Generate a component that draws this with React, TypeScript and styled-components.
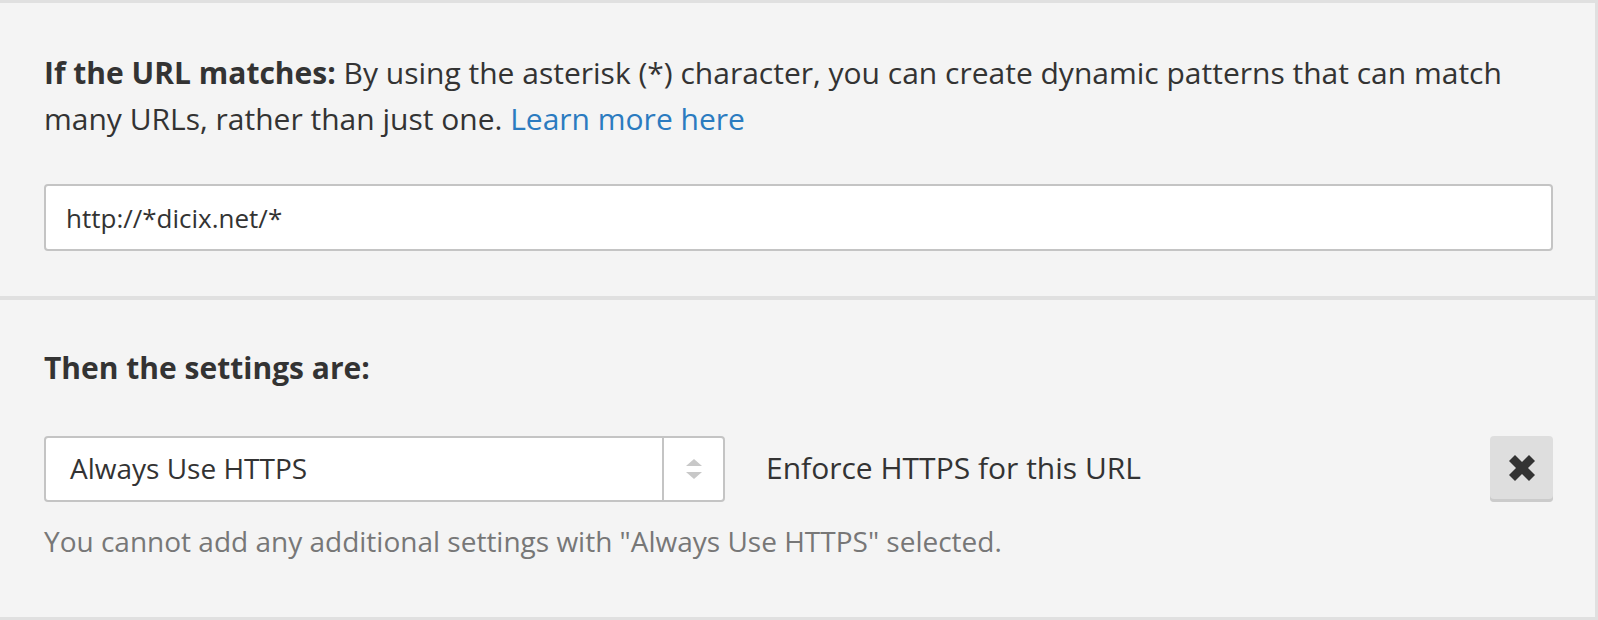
import React from "react";
import styled, { createGlobalStyle } from "styled-components";

const Global = createGlobalStyle`
  html, body { margin: 0; padding: 0; background: #ffffff; }
  body { font-family: "Open Sans", "Noto Sans", sans-serif; }
`;

const Panel = styled.div`
  box-sizing: border-box;
  width: 1598px;
  height: 620px;
  background: #f4f4f4;
  border-top: 3px solid #e0e0e0;
  border-right: 3px solid #e0e0e0;
  border-bottom: 3px solid #e0e0e0;
  display: flex;
  flex-direction: column;
  color: #333333;
  font-size: 28px;
  line-height: 46px;
`;

const Section = styled.section<{ $top: number; $bottom: number; $divider?: boolean }>`
  padding: ${(p) => p.$top}px 42px ${(p) => p.$bottom}px 44px;
  border-top: ${(p) => (p.$divider ? "4px solid #e0e0e0" : "none")};
  display: flex;
  flex-direction: column;
`;

const Paragraph = styled.p`
  margin: 0;
  font-size: 30px;
  line-height: 46px;
`;

const Strong = styled.strong`
  font-weight: 700;
`;

const Link = styled.a`
  color: #2b7bc0;
  text-decoration: none;
`;

const TextInput = styled.div`
  box-sizing: border-box;
  margin-top: 42px;
  height: 67px;
  background: #ffffff;
  border: 2px solid #c4c4c4;
  border-radius: 4px;
  padding: 0 20px;
  display: flex;
  align-items: center;
  font-size: 26px;
  color: #333333;
`;

const Heading = styled.h3`
  margin: 0;
  font-size: 30px;
  line-height: 46px;
  font-weight: 700;
`;

const SettingRow = styled.div`
  margin-top: 45px;
  display: flex;
  align-items: center;
`;

const Select = styled.div`
  box-sizing: border-box;
  width: 681px;
  height: 66px;
  background: #ffffff;
  border: 2px solid #c4c4c4;
  border-radius: 4px;
  display: flex;
  align-items: stretch;
`;

const SelectValue = styled.div`
  flex: 1;
  display: flex;
  align-items: center;
  padding-left: 24px;
  padding-bottom: 3px;
  font-size: 28px;
`;

const SelectArrows = styled.div`
  width: 59px;
  border-left: 2px solid #c4c4c4;
  display: flex;
  flex-direction: column;
  align-items: center;
  justify-content: center;
  gap: 6px;
`;

const Triangle = styled.span<{ $down?: boolean }>`
  width: 0;
  height: 0;
  border-left: 8px solid transparent;
  border-right: 8px solid transparent;
  ${(p) =>
    p.$down ? "border-top: 7px solid #c8c8c8;" : "border-bottom: 7px solid #c8c8c8;"}
`;

const Description = styled.span`
  margin-left: 41px;
  padding-bottom: 2px;
  font-size: 30px;
`;

const RemoveButton = styled.button`
  margin-left: auto;
  box-sizing: border-box;
  width: 63px;
  height: 66px;
  border: none;
  border-radius: 4px;
  background: #dedede;
  box-shadow: inset 0 -3px 0 #cbcbcb;
  display: flex;
  align-items: center;
  justify-content: center;
  padding: 0 0 3px 0;
  cursor: pointer;
`;

const Help = styled.p`
  margin: 16px 0 0 0;
  color: #777777;
  font-size: 28px;
`;

const CloseIcon = () => (
  <svg width="26" height="26" viewBox="0 0 26 26">
    <g stroke="#333333" strokeWidth="8.5" strokeLinecap="butt">
      <line x1="3" y1="3" x2="23" y2="23" />
      <line x1="23" y1="3" x2="3" y2="23" />
    </g>
  </svg>
);

export default function App() {
  return (
    <>
      <Global />
      <Panel>
        <Section $top={47} $bottom={45}>
          <Paragraph>
            <Strong>If the URL matches:</Strong> By using the asterisk (*) character, you can
            create dynamic patterns that can match many URLs, rather than just one.{" "}
            <Link href="#">Learn more here</Link>
          </Paragraph>
          <TextInput>http://*dicix.net/*</TextInput>
        </Section>
        <Section $top={45} $bottom={40} $divider>
          <Heading>Then the settings are:</Heading>
          <SettingRow>
            <Select>
              <SelectValue>Always Use HTTPS</SelectValue>
              <SelectArrows>
                <Triangle />
                <Triangle $down />
              </SelectArrows>
            </Select>
            <Description>Enforce HTTPS for this URL</Description>
            <RemoveButton aria-label="Remove">
              <CloseIcon />
            </RemoveButton>
          </SettingRow>
          <Help>You cannot add any additional settings with "Always Use HTTPS" selected.</Help>
        </Section>
      </Panel>
    </>
  );
}
